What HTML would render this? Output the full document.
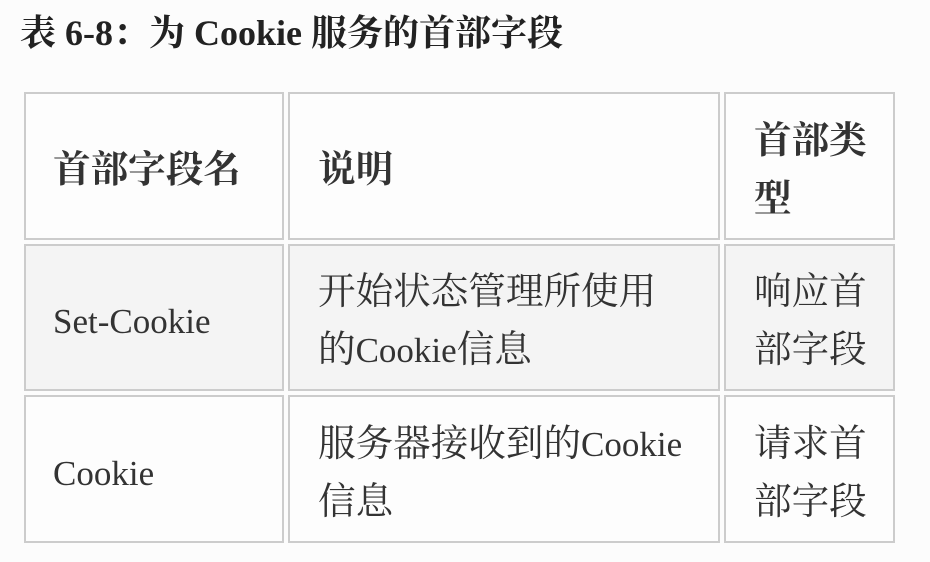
<!DOCTYPE html>
<html><head><meta charset="utf-8"><style>
body{margin:0;width:930px;height:562px;background:#fcfcfc;overflow:hidden;font-family:"Liberation Serif","Noto Serif CJK SC",serif;color:#333;}
.t{position:absolute;left:20px;top:11px;font-size:36px;font-weight:bold;line-height:44px;white-space:nowrap;color:#222;}
.c{position:absolute;box-sizing:border-box;border:2px solid #ccc;background:#fdfdfd;display:flex;align-items:center;font-size:37.6px;line-height:58px;white-space:nowrap;padding-top:9px;}
.g{background:#f4f4f4;}
.b{font-weight:bold;}
.l{font-size:35px;}
</style></head><body>
<div class="t">表 6-8：为 Cookie 服务的首部字段</div>

<div class="c b" style="left:24px;top:92px;width:260px;height:148px;padding-left:27px">首部字段名</div>
<div class="c b" style="left:288px;top:92px;width:432px;height:148px;padding-left:28px">说明</div>
<div class="c b" style="left:724px;top:92px;width:171px;height:148px;padding-left:28px">首部类<br>型</div>

<div class="c g l" style="left:24px;top:244px;width:260px;height:147px;padding-left:27px">Set-Cookie</div>
<div class="c g" style="left:288px;top:244px;width:432px;height:147px;padding-left:28px"><div>开始状态管理所使用<br>的<span class="l">Cookie</span>信息</div></div>
<div class="c g" style="left:724px;top:244px;width:171px;height:147px;padding-left:28px"><div>响应首<br>部字段</div></div>

<div class="c l" style="left:24px;top:395px;width:260px;height:148px;padding-left:27px">Cookie</div>
<div class="c" style="left:288px;top:395px;width:432px;height:148px;padding-left:28px"><div>服务器接收到的<span class="l">Cookie</span><br>信息</div></div>
<div class="c" style="left:724px;top:395px;width:171px;height:148px;padding-left:28px"><div>请求首<br>部字段</div></div>
</body></html>
